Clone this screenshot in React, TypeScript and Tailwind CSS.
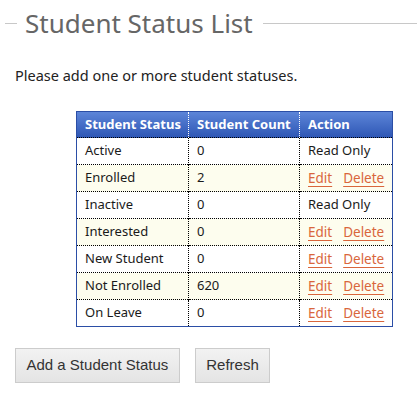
import React from "react";

type Status = { name: string; count: number; readOnly: boolean };

const rows: Status[] = [
  { name: "Active", count: 0, readOnly: true },
  { name: "Enrolled", count: 2, readOnly: false },
  { name: "Inactive", count: 0, readOnly: true },
  { name: "Interested", count: 0, readOnly: false },
  { name: "New Student", count: 0, readOnly: false },
  { name: "Not Enrolled", count: 620, readOnly: false },
  { name: "On Leave", count: 0, readOnly: false },
];

const font = "font-['Noto_Sans','DejaVu_Sans',sans-serif]";

export default function App() {
  return (
    <div className={`w-[417px] h-[398px] bg-white ${font} overflow-hidden`}>
      <div className="flex items-center pt-[5px] pl-[5px]">
        <div className="w-[12px] h-px bg-[#c8c8c8]" />
        <h1 className="px-[8px] text-[26px] leading-[36px] text-[#666] font-normal">Student Status List</h1>
        <div className="flex-1 h-px bg-[#c8c8c8] ml-[2px]" />
      </div>

      <p className="mt-[24px] ml-[15px] text-[14.5px] leading-[20px] text-[#222]">Please add one or more student statuses.</p>

      <table className="mt-[26px] ml-[76px] w-[317px] border-collapse border border-[#2b4ea6] text-[13px] text-[#1a1a1a]">
        <thead>
          <tr className="bg-gradient-to-b from-[#5d85d8] to-[#2d55b4] text-white h-[26px]">
            <th className="w-[112px] text-left font-bold pl-[8px] border-r border-dotted border-white">Student Status</th>
            <th className="w-[111px] text-left font-bold pl-[8px] border-r border-dotted border-white">Student Count</th>
            <th className="text-left font-bold pl-[8px]">Action</th>
          </tr>
        </thead>
        <tbody>
          {rows.map((r, i) => (
            <tr key={r.name} className={`h-[27px] ${i % 2 === 1 ? "bg-[#fdfdee]" : "bg-white"}`}>
              <td className="pl-[8px] border-t border-r border-dotted border-black">{r.name}</td>
              <td className="pl-[8px] border-t border-r border-dotted border-black">{r.count}</td>
              <td className="pl-[8px] border-t border-dotted border-black">
                {r.readOnly ? (
                  "Read Only"
                ) : (
                  <span className="flex gap-[11px] text-[13.5px]">
                    <a href="#" className="text-[#d9663c] underline underline-offset-[3px]">Edit</a>
                    <a href="#" className="text-[#d9663c] underline underline-offset-[3px]">Delete</a>
                  </span>
                )}
              </td>
            </tr>
          ))}
        </tbody>
      </table>

      <div className="flex gap-[15px] mt-[21px] ml-[15px] font-['Liberation_Sans',Arial,sans-serif]">
        <button className="h-[35px] px-[10.5px] text-[15px] text-[#333] border border-[#ccc] bg-gradient-to-b from-[#f2f2f2] to-[#e4e4e4]">
          Add a Student Status
        </button>
        <button className="h-[35px] px-[10.5px] text-[15px] text-[#333] border border-[#ccc] bg-gradient-to-b from-[#f2f2f2] to-[#e4e4e4]">
          Refresh
        </button>
      </div>
    </div>
  );
}
